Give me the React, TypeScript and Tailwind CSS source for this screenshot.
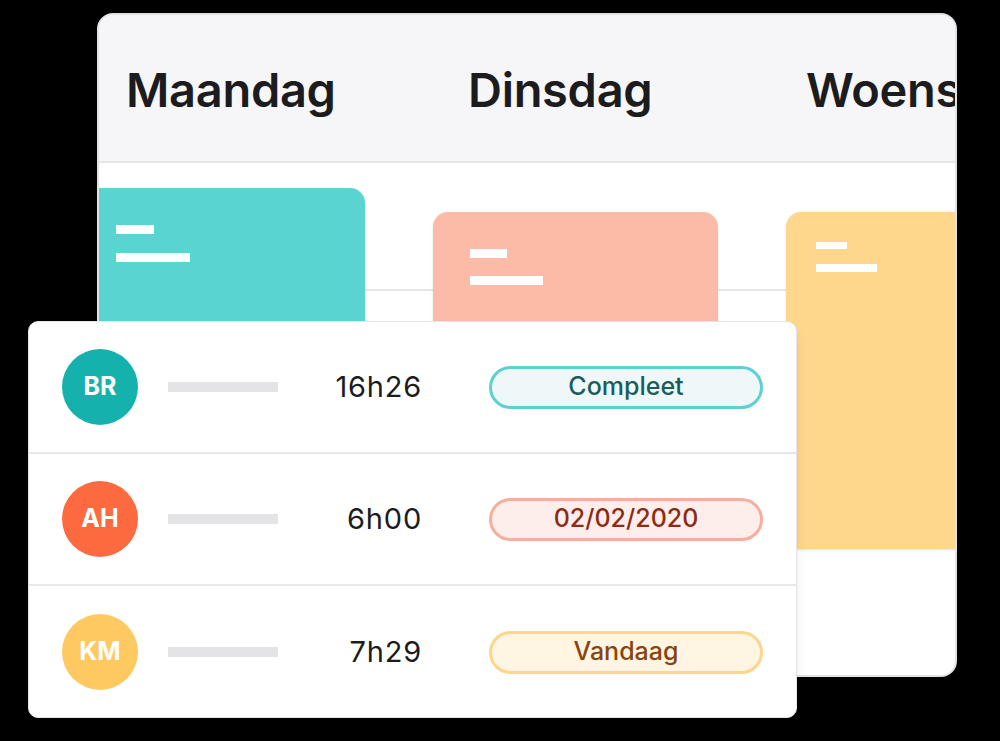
import React from 'react';

const days = [
  { name: 'Maandag', w: 'w-[342px]' },
  { name: 'Dinsdag', w: 'w-[338px]' },
  { name: 'Woensdag', w: 'w-[340px]' },
];

const rows = [
  { initials: 'BR', avatar: 'bg-[#15b2ad]', time: '16h26', label: 'Compleet', badge: 'border-[#5dd0cf] bg-[#eef8f9] text-[#1c5b5b]' },
  { initials: 'AH', avatar: 'bg-[#fe6a3f]', time: '6h00', label: '02/02/2020', badge: 'border-[#f7ae9d] bg-[#feeeeb] text-[#8d2b14]' },
  { initials: 'KM', avatar: 'bg-[#ffc962]', time: '7h29', label: 'Vandaag', badge: 'border-[#fdd68b] bg-[#fff5e2] text-[#87450f]' },
];

function App() {
  return (
    <div className="relative w-[1000px] h-[741px] bg-black overflow-hidden font-['Inter','Noto_Sans',sans-serif]">
      {/* Week board */}
      <div className="ml-[97px] mt-[13px] w-[860px] h-[664px] rounded-[16px] border-2 border-[#e2e2e5] bg-white overflow-hidden shadow-md">
        <div className="flex h-[148px] items-center bg-[#f6f6f8] border-b-2 border-[#e6e6e8]">
          {days.map((d) => (
            <div key={d.name} className={`${d.w} flex-none pl-[27px] pt-[5px] text-[47px] font-semibold tracking-[-0.3px] text-[#1c1c1f] whitespace-nowrap`}>
              {d.name}
            </div>
          ))}
        </div>

        <div className="relative">
          <div className="absolute left-0 right-0 top-[126px] h-[2px] bg-[#e6e6e8]" />
          <div className="relative flex items-start gap-[68px] ml-[-19px]">
            <div className="mt-[25px] w-[285px] h-[337px] flex-none rounded-[15px] bg-[#5ad4d0] pl-[36px] pt-[37px] shadow-sm">
              <div className="w-[38px] h-[9px] bg-white" />
              <div className="mt-[19px] w-[74px] h-[9px] bg-white" />
            </div>
            <div className="mt-[49px] w-[285px] h-[337px] flex-none rounded-[15px] bg-[#fcbba6] pl-[37px] pt-[37px] shadow-sm">
              <div className="w-[37px] h-[9px] bg-white" />
              <div className="mt-[18px] w-[73px] h-[9px] bg-white" />
            </div>
            <div className="mt-[49px] w-[285px] h-[337px] flex-none rounded-[15px] bg-[#fed78d] pl-[30px] pt-[30px] shadow-sm">
              <div className="w-[31px] h-[7px] bg-white" />
              <div className="mt-[15px] w-[61px] h-[8px] bg-white" />
            </div>
          </div>
        </div>
      </div>

      {/* Team list */}
      <div className="absolute left-[28px] top-[321px] w-[769px] h-[397px] rounded-[10px] border border-[#e4e4e6] bg-white shadow-lg overflow-hidden">
        {rows.map((r, i) => (
          <div
            key={r.initials}
            className={`flex items-center h-[132px] pl-[33px] ${i < rows.length - 1 ? 'border-b-2 border-[#e8e8ea]' : ''}`}
          >
            <div className={`w-[76px] h-[76px] flex-none rounded-full ${r.avatar} flex items-center justify-center text-white text-[25px] font-bold`}>
              {r.initials}
            </div>
            <div className="ml-[30px] w-[110px] h-[10px] bg-[#e4e4e6]" />
            <div className="w-[144px] text-right text-[29px] tracking-[0.8px] text-[#1c1c1f]">{r.time}</div>
            <div className={`ml-[67px] w-[274px] h-[43px] flex-none rounded-full border-[3px] ${r.badge} flex items-center justify-center text-[25px] font-medium`}>
              {r.label}
            </div>
          </div>
        ))}
      </div>
    </div>
  );
}

export default App;
